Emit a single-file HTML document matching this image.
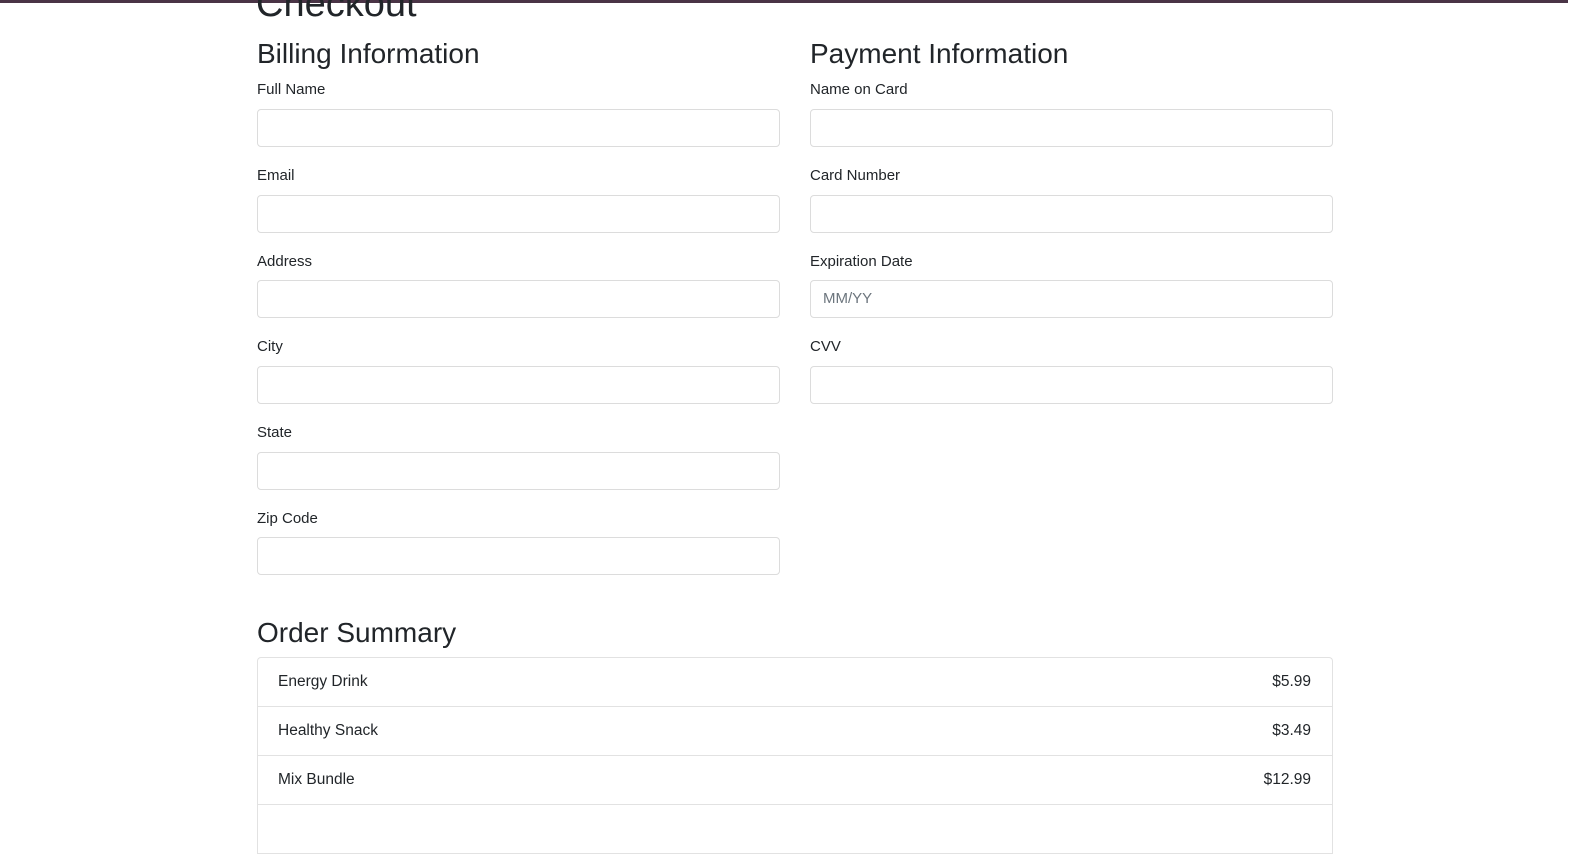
<!DOCTYPE html>
<html><head><style>
body{margin:0;background:#fff;font-family:"Liberation Sans",sans-serif;color:#212529;width:1574px;height:816px;overflow:hidden;position:relative}
.bar{position:absolute;left:0;top:0;width:1568px;height:3px;background:#4a3446}
.h1{position:absolute;left:256px;top:-18px;font-size:38px;font-weight:500;line-height:44px}
.h3{position:absolute;font-size:28px;font-weight:500;line-height:32px}
.lbl{position:absolute;font-size:15px;line-height:18px}
.inp{position:absolute;width:521px;height:36px;border:1px solid #dcdcdc;border-radius:4px;box-sizing:content-box;font-size:15px;color:#6c757d;line-height:36px;padding-left:0}
.list{position:absolute;left:257px;top:657px;width:1074px;border:1px solid #e2e2e2;border-radius:4px 4px 0 0;border-bottom:none}
.row{height:48px;border-bottom:1px solid #e2e2e2;display:flex;justify-content:space-between;align-items:center;padding:0 21px 0 20px;font-size:15.5px}
</style></head><body>
<div class="bar"></div>
<div class="h1">Checkout</div>
<div class="h3" style="left:257px;top:38px">Billing Information</div>
<div class="h3" style="left:810px;top:38px">Payment Information</div>

<div class="lbl" style="left:257px;top:81px">Full Name</div><div class="inp" style="left:257px;top:109px"></div>
<div class="lbl" style="left:257px;top:167px">Email</div><div class="inp" style="left:257px;top:195px"></div>
<div class="lbl" style="left:257px;top:253px">Address</div><div class="inp" style="left:257px;top:280px"></div>
<div class="lbl" style="left:257px;top:338px">City</div><div class="inp" style="left:257px;top:366px"></div>
<div class="lbl" style="left:257px;top:424px">State</div><div class="inp" style="left:257px;top:452px"></div>
<div class="lbl" style="left:257px;top:510px">Zip Code</div><div class="inp" style="left:257px;top:537px"></div>

<div class="lbl" style="left:810px;top:81px">Name on Card</div><div class="inp" style="left:810px;top:109px"></div>
<div class="lbl" style="left:810px;top:167px">Card Number</div><div class="inp" style="left:810px;top:195px"></div>
<div class="lbl" style="left:810px;top:253px">Expiration Date</div><div class="inp" style="left:810px;top:280px"><span style="margin-left:12px">MM/YY</span></div>
<div class="lbl" style="left:810px;top:338px">CVV</div><div class="inp" style="left:810px;top:366px"></div>

<div class="h3" style="left:257px;top:617px">Order Summary</div>
<div class="list">
<div class="row"><span>Energy Drink</span><span>$5.99</span></div>
<div class="row"><span>Healthy Snack</span><span>$3.49</span></div>
<div class="row"><span>Mix Bundle</span><span>$12.99</span></div>
<div class="row"></div>
</div>
</body></html>
